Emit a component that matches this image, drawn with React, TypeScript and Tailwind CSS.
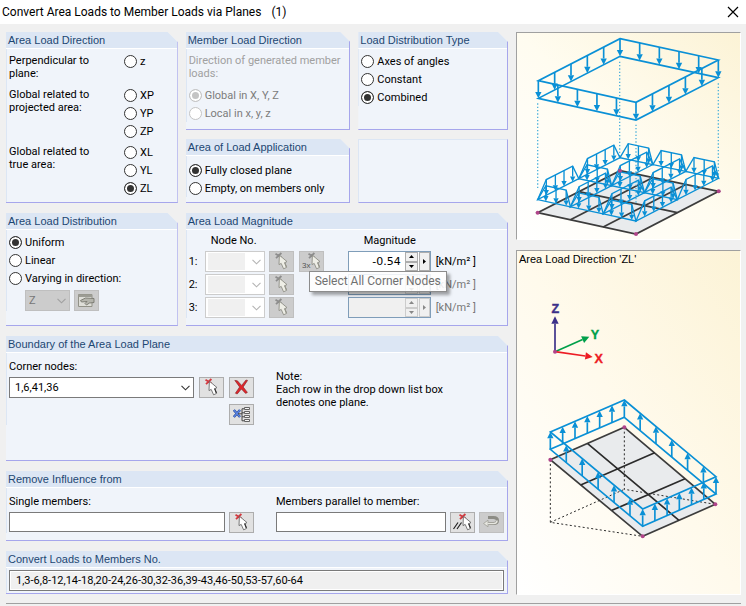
import React from "react";

type Point = [number, number];

const BLUE = "#0a90d6";
const NODE = "#b0448a";

const lerp = (a: Point, b: Point, t: number): Point => [
  a[0] + (b[0] - a[0]) * t,
  a[1] + (b[1] - a[1]) * t,
];
const up = (p: Point, h: number): Point => [p[0], p[1] - h];
const pts = (...list: Point[]) => list.map((p) => p.join(",")).join(" ");

interface PanelProps {
  title?: string;
  className?: string;
  children?: React.ReactNode;
}

const Panel: React.FC<PanelProps> = ({ title, className = "", children }) => {
  if (!title) {
    return (
      <section
        className={`border border-[#dce6f4] border-r-[#a6a6ec] border-b-[#a6a6ec] bg-[#f0f4fa] ${className}`}
      />
    );
  }
  return (
    <section
      className={`border-r border-b border-[#a6a6ec] bg-[#f0f4fa] [clip-path:polygon(0_0,calc(100%-10px)_0,100%_10px,100%_100%,0_100%)] ${className}`}
    >
      <h2 className="h-[17px] border-b border-white bg-[#dce6f4] pl-0.5 font-['Liberation_Sans',sans-serif] text-[11px] leading-4 text-[#1d4672]">
        {title}
      </h2>
      <div className="border-l border-[#dce6f4] pr-[3px] pl-0.5">{children}</div>
    </section>
  );
};

interface RadioProps {
  name: string;
  label: string;
  checked?: boolean;
  disabled?: boolean;
}

const Radio: React.FC<RadioProps> = ({ name, label, checked, disabled }) => (
  <label className={`flex h-[18px] items-center gap-[3px] ${disabled ? "text-[#7c7c7c]" : ""}`}>
    <input
      type="radio"
      name={name}
      defaultChecked={checked}
      disabled={disabled}
      className="size-[13px] shrink-0 appearance-none rounded-full border border-[#333] bg-white checked:bg-[#333] checked:shadow-[inset_0_0_0_2px_white] disabled:border-[#c4c4c4] disabled:checked:bg-[#c4c4c4]"
    />
    {label}
  </label>
);

const Chevron: React.FC<{ className: string }> = ({ className }) => (
  <svg
    viewBox="0 0 9 6"
    className={`pointer-events-none absolute top-2 right-1 h-[6px] w-[9px] fill-none ${className}`}
  >
    <path d="M0.5 0.8 L4.5 4.8 L8.5 0.8" strokeWidth="1.1" />
  </svg>
);

interface IconButtonProps {
  label: string;
  disabled?: boolean;
  children: React.ReactNode;
}

const IconButton: React.FC<IconButtonProps> = ({ label, disabled, children }) => (
  <button
    type="button"
    aria-label={label}
    disabled={disabled}
    className="flex h-[21px] w-[25px] shrink-0 items-center justify-center border border-[#adadad] bg-[#e1e1e1] disabled:border-[#bfbfbf] disabled:bg-[#cccccc]"
  >
    {children}
  </button>
);

const PickIcon: React.FC<{ muted?: boolean; prefix?: "3x" | "lines" }> = ({ muted, prefix }) => (
  <svg viewBox="0 0 21 19" className="h-[19px] w-[21px]">
    {prefix === "3x" && (
      <text x="1" y="16" fontSize="8" fontFamily="Liberation Sans" fill="#555">
        3x
      </text>
    )}
    {prefix === "lines" && (
      <path d="M1.5 16 L6 9.5 M5 16 L9.5 9.5" stroke="#222" strokeWidth="1.2" />
    )}
    <g transform={prefix ? "translate(3 0)" : undefined}>
      <path
        d="M4.5 1.8 L10.6 5.6 M10.4 1 L5 6.2"
        stroke={muted ? "#8d8d8d" : "#d23a40"}
        strokeWidth="1.8"
      />
      <path
        d="M8.4 3.2 L8 12.6 L10.2 11.4 L12.6 16.8 L15.6 15.4 L13.8 10.6 L16 9.6 Z"
        fill={muted ? "#eeeee6" : "#fff"}
        stroke={muted ? "#85857c" : "#5a5a5a"}
        strokeWidth="0.8"
      />
      <path d="M13.6 10.6 L15.4 15" stroke={muted ? "#95958a" : "#333"} strokeWidth="1.2" />
    </g>
  </svg>
);

const DeleteIcon = () => (
  <svg viewBox="0 0 21 19" className="h-[19px] w-[21px]">
    <path
      d="M3.8 2.4 L6.4 2.8 L10.6 7.4 L15 2 L16.6 2.4 L12.2 9 L16.4 14.4 L14.6 15.4 L10.4 11 L6.2 16 L4.4 15.2 L8.6 9 Z"
      fill="#e0262b"
      stroke="#7c2226"
      strokeWidth="0.6"
    />
  </svg>
);

const PlaneListIcon = () => (
  <svg viewBox="0 0 21 19" className="h-[19px] w-[21px] fill-none">
    <path d="M2.8 5 L9 12 M9 5 L2.8 12" stroke="#2d4d96" strokeWidth="2.6" />
    <path d="M2.8 5 L9 12 M9 5 L2.8 12" stroke="#5a84e4" strokeWidth="1.2" />
    <path d="M7 8.8 H11 M13 3.8 H11 V15.8 H13 M11 7.8 H13 M11 11.8 H13" stroke="#444" />
    <path
      d="M13.5 2.5 H18.5 V4.5 H13.5 Z M13.5 6.5 H18.5 V8.5 H13.5 Z M13.5 10.5 H18.5 V12.5 H13.5 Z M13.5 14.5 H18.5 V16.5 H13.5 Z"
      fill="#f4f4f4"
      stroke="#555"
      strokeWidth="0.9"
    />
  </svg>
);

const HandIcon = () => (
  <svg viewBox="0 0 21 19" className="h-[19px] w-[21px]">
    <path d="M2.5 3.5 H16 V15.5 H2.5 Z" fill="#deded8" stroke="#929288" />
    <path d="M2.5 3.5 H16 V6 H2.5 Z" fill="#9c9c94" />
    <path
      d="M4.5 9.5 L9.5 7 L18 7.5 V11.5 L13.5 12 L10.5 14 L9 12.5 L11 10.5 L5.5 11 Z"
      fill="#b4b4ac"
      stroke="#77776e"
      strokeWidth="0.9"
    />
  </svg>
);

const ReturnIcon = () => (
  <svg viewBox="0 0 21 19" className="h-[19px] w-[21px] fill-none">
    <path d="M7 4.5 H12.5 Q16.5 4.5 16.5 7.5 Q16.5 10.5 12.5 10.5 H7" stroke="#8c8c85" strokeWidth="3" />
    <path d="M2.5 10.5 L7 7.2 V13.8 Z" fill="#e6e6e0" stroke="#a0a098" strokeWidth="0.8" />
    <path d="M6.5 10.5 H12.5 Q16 10.5 16 7.5" stroke="#e6e6e0" strokeWidth="1.6" />
  </svg>
);

interface ArrowProps {
  from: Point;
  to: Point;
  color?: string;
  size?: number;
  width?: number;
}

const Arrow: React.FC<ArrowProps> = ({ from, to, color = BLUE, size = 19, width = 5 }) => {
  const len = Math.hypot(to[0] - from[0], to[1] - from[1]);
  const ux = (to[0] - from[0]) / len;
  const uy = (to[1] - from[1]) / len;
  const base: Point = [to[0] - ux * size, to[1] - uy * size];
  const half = size * 0.5;
  return (
    <>
      <line x1={from[0]} y1={from[1]} x2={base[0]} y2={base[1]} stroke={color} strokeWidth={width} />
      <polygon
        points={pts(to, [base[0] - uy * half, base[1] + ux * half], [base[0] + uy * half, base[1] - ux * half])}
        fill={color}
      />
    </>
  );
};

// Trapezoidal member load standing on the segment a-b
const MemberLoad: React.FC<{ a: Point; b: Point; steps: number[] }> = ({ a, b, steps }) => {
  const h = 47;
  const first = steps[0];
  const last = steps[steps.length - 1];
  return (
    <g>
      <polygon
        points={pts(a, up(lerp(a, b, first), h), up(lerp(a, b, last), h), b)}
        fill="none"
        stroke={BLUE}
        strokeWidth="4"
      />
      {steps.map((t) => (
        <Arrow key={t} from={up(lerp(a, b, t), h)} to={lerp(a, b, t)} size={16} width={4} />
      ))}
    </g>
  );
};

const DistributionDrawing = () => {
  const top: Point[] = [[330, 56], [625, 120], [378, 247], [85, 182]];
  const plane: Point[] = [[330, 452], [626, 514], [378, 642], [83, 578]];
  const [pa, pb, pc, pd] = plane;
  const [la, lb, lc, ld] = plane.map((p) => up(p, 39));
  const thirds = [0, 1 / 3, 2 / 3, 1];
  return (
    <svg viewBox="21 39 669 618" className="block w-full fill-none" role="img" aria-label="Load distribution">
      <polygon points={pts(...plane)} fill="#e9ebed" stroke="#3c3c3c" strokeWidth="5" />
      {[1 / 3, 2 / 3].map((t) => (
        <polyline key={t} points={pts(lerp(pd, pc, t), lerp(pa, pb, t))} stroke="#3c3c3c" strokeWidth="5" />
      ))}
      <polyline points={pts(lerp(pd, pa, 0.5), lerp(pc, pb, 0.5))} stroke="#3c3c3c" strokeWidth="5" />
      <path
        d="M329 125 V410 M83 250 V506 M378 314 V550 M625 190 V470"
        stroke="#4fb2dc"
        strokeWidth="4"
        strokeDasharray="4 6"
      />
      {[0, 0.5, 1].map((v) =>
        [0, 1, 2].map((i) => (
          <MemberLoad
            key={`${v}-${i}`}
            a={lerp(lerp(ld, lc, thirds[i]), lerp(la, lb, thirds[i]), v)}
            b={lerp(lerp(ld, lc, thirds[i + 1]), lerp(la, lb, thirds[i + 1]), v)}
            steps={[0.25, 0.56, 0.87]}
          />
        )),
      )}
      {thirds.map((t) =>
        [0, 0.5].map((v) => (
          <MemberLoad
            key={`${t}-${v}`}
            a={lerp(lerp(ld, lc, t), lerp(la, lb, t), v)}
            b={lerp(lerp(ld, lc, t), lerp(la, lb, t), v + 0.5)}
            steps={[0.21, 0.43, 0.64, 0.85]}
          />
        )),
      )}
      <polygon points={pts(...top)} stroke={BLUE} strokeWidth="5" />
      <polygon points={pts(...top.map((p) => up(p, -53)))} stroke={BLUE} strokeWidth="5" />
      {top.map((p, i) =>
        [0, 0.2, 0.4, 0.6, 0.8].map((t) => {
          const q = lerp(p, top[(i + 1) % 4], t);
          return <Arrow key={`${i}-${t}`} from={q} to={up(q, -53)} />;
        }),
      )}
      {plane.map((p) => (
        <circle key={p[0]} cx={p[0]} cy={p[1]} r="6" fill={NODE} />
      ))}
    </svg>
  );
};

const DirectionDrawing = () => {
  const top: Point[] = [[343, 465], [618, 695], [398, 792], [121, 561]];
  const [ta, tb, tc, td] = top;
  const plane: Point[] = [[343, 547], [616, 778], [398, 874], [121, 644]];
  const long = [0, 0.1725, 0.345, 0.5175, 0.69, 0.8625, 1];
  const short = [1, 2, 3, 4, 5].map((n) => n / 6);
  const feet = [
    ...long.map((t) => lerp(ta, tb, t)),
    ...long.map((t) => lerp(td, tc, t)),
    ...short.map((t) => lerp(td, ta, t)),
    ...short.map((t) => lerp(tc, tb, t)),
  ];
  return (
    <svg viewBox="21 66 669 981" className="block w-full fill-none" role="img" aria-label="Load direction ZL">
      <g fontFamily="Liberation Sans" fontWeight="bold" fontSize="38" textAnchor="middle">
        <text x="136" y="204" fill="#3b3089" stroke="#3b3089">Z</text>
        <text x="255" y="282" fill="#00a04a" stroke="#00a04a">Y</text>
        <text x="266" y="353" fill="#ed1c24" stroke="#ed1c24">X</text>
      </g>
      <Arrow from={[135, 320]} to={[135, 214]} color="#3b3089" size={22} />
      <Arrow from={[135, 320]} to={[238, 275]} color="#00a04a" size={22} />
      <Arrow from={[135, 320]} to={[248, 336]} color="#ed1c24" size={22} />
      <circle cx="135" cy="320" r="6" fill={NODE} />

      <polygon points={pts(...plane)} fill="#e9ebed" stroke="#3c3c3c" strokeWidth="5" />
      <path d="M233 596 L507 826 M212 720 L434 623 M306 796 L525 701" stroke="#2b2b2b" strokeWidth="5" />
      <path
        d="M121 644 V832 L398 874 M121 832 L343 733 M343 547 V733 L616 778"
        stroke="#2b2b2b"
        strokeWidth="3"
        strokeDasharray="6 7"
      />
      <polygon points={pts(...top)} stroke={BLUE} strokeWidth="5" />
      <polygon points={pts(...top.map((p) => up(p, -52)))} stroke={BLUE} strokeWidth="5" />
      {feet.map((p, i) => (
        <Arrow key={i} from={up(p, -52)} to={p} />
      ))}
      {plane.map((p) => (
        <circle key={p[0]} cx={p[0]} cy={p[1]} r="6" fill={NODE} />
      ))}
    </svg>
  );
};

interface MagnitudeRowProps {
  index: number;
  value?: string;
}

const MagnitudeRow: React.FC<MagnitudeRowProps> = ({ index, value }) => {
  const disabled = value === undefined;
  const spin = "flex items-center justify-center border border-[#adadad] bg-[#f0f0f0] disabled:border-[#ccc]";
  const glyph = disabled ? "fill-[#888]" : "fill-black";
  return (
    <div className="grid h-[21px] grid-cols-[16px_64px_30px_49px_88px_1fr] items-center">
      <label htmlFor={`node-${index}`}>{index}:</label>
      <span className="relative w-[60px]">
        <select
          id={`node-${index}`}
          disabled
          className="block h-[21px] w-full appearance-none border border-[#ccc] bg-white bg-[linear-gradient(#f0f0f0,#f0f0f0)] bg-[length:37px_17px] bg-[position:2px_1px] bg-no-repeat"
        />
        <Chevron className="stroke-[#b4b4b4]" />
      </span>
      <IconButton label={`Select node ${index}`} disabled>
        <PickIcon muted />
      </IconButton>
      {index === 1 ? (
        <IconButton label="Select three nodes" disabled>
          <PickIcon muted prefix="3x" />
        </IconButton>
      ) : (
        <span />
      )}
      <span className={`flex h-[21px] w-[83px] border border-[#7f9db9] ${disabled ? "bg-[#f0f0f0]" : "bg-white"}`}>
        <input
          type="text"
          aria-label={`Magnitude ${index}`}
          defaultValue={value}
          disabled={disabled}
          className="min-w-0 flex-1 px-1 text-right font-['DejaVu_Sans',sans-serif] text-[11px]"
        />
        <span className="flex w-[13px] flex-col">
          <button type="button" aria-label="Increase" disabled={disabled} className={`flex-1 ${spin}`}>
            <svg viewBox="0 0 5 3" className={`h-[3px] w-[5px] ${glyph}`}>
              <path d="M0 3 L2.5 0 L5 3 Z" />
            </svg>
          </button>
          <button type="button" aria-label="Decrease" disabled={disabled} className={`flex-1 ${spin}`}>
            <svg viewBox="0 0 5 3" className={`h-[3px] w-[5px] ${glyph}`}>
              <path d="M0 0 L2.5 3 L5 0 Z" />
            </svg>
          </button>
        </span>
        <button type="button" aria-label="More" disabled={disabled} className={`ml-px w-[11px] ${spin}`}>
          <svg viewBox="0 0 3 5" className={`h-[5px] w-[3px] ${glyph}`}>
            <path d="M0 0 L3 2.5 L0 5 Z" />
          </svg>
        </button>
      </span>
      <span className={disabled ? "text-[#777]" : ""}>[kN/m² ]</span>
    </div>
  );
};

export default function App() {
  const textBox = "h-5 min-w-0 border border-[#7a7a7a] bg-white";
  return (
    <div className="min-h-screen bg-[#f0f0f0] font-[Roboto,sans-serif] text-[11px] leading-[13px] text-black">
      <header className="flex h-6 items-center justify-between bg-white pr-[7px] pl-0.5">
        <h1 className="flex gap-2.5 text-[12px] leading-4">
          <span>Convert Area Loads to Member Loads via Planes</span>
          <span>(1)</span>
        </h1>
        <button type="button" aria-label="Close">
          <svg viewBox="0 0 12 12" className="size-3 stroke-black">
            <path d="M1 1 L11 11 M11 1 L1 11" strokeWidth="1.2" />
          </svg>
        </button>
      </header>

      <main className="mr-[5px] ml-1.5 flex gap-2 border-b border-[#a0a0a0] pt-2 pb-2">
        <div className="flex min-w-0 flex-1 flex-col gap-2.5">
          <div className="grid grid-cols-[172fr_165fr_150fr] grid-rows-[98px_auto] gap-x-2 gap-y-[9px]">
            <Panel title="Area Load Direction" className="row-span-2">
              <div className="grid grid-cols-[115px_1fr] pt-[3px] pb-[5px]">
                <p className="h-[34px] pt-0.5">Perpendicular to<br />plane:</p>
                <div>
                  <Radio name="direction" label="z" />
                </div>
                <p className="h-[57px] pt-0.5">Global related to<br />projected area:</p>
                <div>
                  <Radio name="direction" label="XP" />
                  <Radio name="direction" label="YP" />
                  <Radio name="direction" label="ZP" />
                </div>
                <p className="pt-0.5">Global related to<br />true area:</p>
                <div>
                  <Radio name="direction" label="XL" />
                  <Radio name="direction" label="YL" />
                  <Radio name="direction" label="ZL" checked />
                </div>
              </div>
            </Panel>
            <Panel title="Member Load Direction">
              <p className="pt-[5px] pb-1.5 text-[#a0a0a0]">Direction of generated member<br />loads:</p>
              <Radio name="member" label="Global in X, Y, Z" checked disabled />
              <Radio name="member" label="Local in x, y, z" disabled />
            </Panel>
            <Panel title="Load Distribution Type">
              <div className="pt-[3px]">
                <Radio name="type" label="Axes of angles" />
                <Radio name="type" label="Constant" />
                <Radio name="type" label="Combined" checked />
              </div>
            </Panel>
            <Panel title="Area of Load Application">
              <div className="pt-[5px]">
                <Radio name="application" label="Fully closed plane" checked />
                <Radio name="application" label="Empty, on members only" />
              </div>
            </Panel>
            <Panel />
          </div>

          <div className="grid grid-cols-[172fr_323fr] gap-2">
            <Panel title="Area Load Distribution" className="min-h-[113px]">
              <div className="pt-[3px]">
                <Radio name="distribution" label="Uniform" checked />
                <Radio name="distribution" label="Linear" />
                <Radio name="distribution" label="Varying in direction:" />
                <div className="flex gap-1 pt-[3px] pl-4">
                  <span className="relative w-[45px]">
                    <select
                      aria-label="Direction"
                      disabled
                      className="block h-[21px] w-full appearance-none border border-[#bfbfbf] bg-[#ccc] pl-[3px] text-[#777]"
                    >
                      <option>Z</option>
                    </select>
                    <Chevron className="stroke-[#a0a0a0]" />
                  </span>
                  <IconButton label="Edit distribution" disabled>
                    <HandIcon />
                  </IconButton>
                </div>
              </div>
            </Panel>
            <Panel title="Area Load Magnitude">
              <div className="relative flex flex-col gap-0.5 pt-0.5">
                <div className="grid h-[17px] grid-cols-[22px_153px_1fr] items-center">
                  <span className="col-start-2">Node No.</span>
                  <span>Magnitude</span>
                </div>
                <MagnitudeRow index={1} value="-0.54" />
                <MagnitudeRow index={2} />
                <MagnitudeRow index={3} />
                <div
                  role="tooltip"
                  className="absolute top-[41px] left-[120px] h-[21px] border border-[#8c8c8c] bg-white/85 px-[5px] text-[12px] leading-[19px] whitespace-nowrap text-[#707070] shadow-[3px_3px_3px_rgba(0,0,0,0.35)]"
                >
                  Select All Corner Nodes
                </div>
              </div>
            </Panel>
          </div>

          <Panel title="Boundary of the Area Load Plane" className="min-h-[125px]">
            <div className="grid grid-cols-[245fr_228fr] gap-[22px] pt-[7px]">
              <div>
                <label htmlFor="corner-nodes" className="block">Corner nodes:</label>
                <div className="flex gap-[5px] pt-1">
                  <span className="relative flex-1">
                    <select
                      id="corner-nodes"
                      className="block h-[21px] w-full appearance-none border border-[#7a7a7a] bg-white pl-[5px]"
                    >
                      <option>1,6,41,36</option>
                    </select>
                    <Chevron className="stroke-[#333]" />
                  </span>
                  <IconButton label="Pick corner nodes">
                    <PickIcon />
                  </IconButton>
                  <IconButton label="Delete">
                    <DeleteIcon />
                  </IconButton>
                </div>
                <div className="flex justify-end pt-1.5">
                  <IconButton label="Plane list">
                    <PlaneListIcon />
                  </IconButton>
                </div>
              </div>
              <p className="pt-2.5">
                Note:<br />Each row in the drop down list box<br />denotes one plane.
              </p>
            </div>
          </Panel>

          <Panel title="Remove Influence from" className="min-h-[70px]">
            <div className="grid grid-cols-[245fr_228fr] gap-[22px] pt-[7px]">
              <div>
                <label htmlFor="single" className="block">Single members:</label>
                <div className="flex gap-1 pt-1">
                  <input id="single" type="text" className={`flex-1 ${textBox}`} />
                  <IconButton label="Pick members">
                    <PickIcon />
                  </IconButton>
                </div>
              </div>
              <div>
                <label htmlFor="parallel" className="block">Members parallel to member:</label>
                <div className="flex gap-1 pt-1">
                  <input id="parallel" type="text" className={`flex-1 ${textBox}`} />
                  <IconButton label="Pick parallel member">
                    <PickIcon prefix="lines" />
                  </IconButton>
                  <IconButton label="Undo" disabled>
                    <ReturnIcon />
                  </IconButton>
                </div>
              </div>
            </div>
          </Panel>

          <Panel title="Convert Loads to Members No.">
            <div className="py-0.5">
              <input
                type="text"
                readOnly
                aria-label="Convert Loads to Members No."
                defaultValue="1,3-6,8-12,14-18,20-24,26-30,32-36,39-43,46-50,53-57,60-64"
                className="block h-[21px] w-full border border-[#7a7a7a] bg-[#f0f0f0] px-1.5 shadow-[inset_0_0_0_1px_white]"
              />
            </div>
          </Panel>
        </div>

        <aside className="flex w-[225px] shrink-0 flex-col gap-2.5">
          <div className="border border-white border-t-[#a0a0a0] border-l-[#a0a0a0] bg-linear-to-tr from-white via-[#fffcf0] to-[#fcf3d6]">
            <DistributionDrawing />
          </div>
          <div className="flex-1 border border-white border-t-[#a0a0a0] border-l-[#a0a0a0] bg-linear-to-tr from-white via-[#fffaec] to-[#fcf3d6]">
            <p className="h-4 pl-0.5 font-['Liberation_Sans',sans-serif] leading-4">Area Load Direction 'ZL'</p>
            <DirectionDrawing />
          </div>
        </aside>
      </main>
    </div>
  );
}
